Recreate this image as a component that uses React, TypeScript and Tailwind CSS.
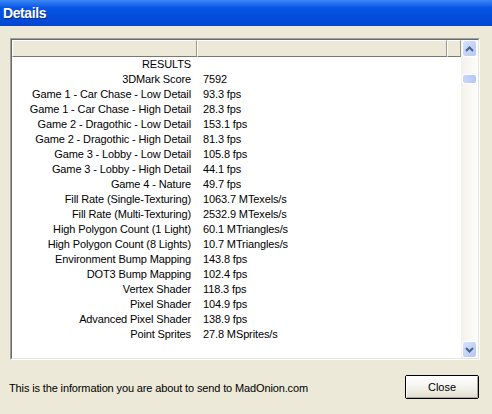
import React from 'react';

// --- Data ---

const results: [string, string][] = [
  ['RESULTS', ''],
  ['3DMark Score', '7592'],
  ['Game 1 - Car Chase - Low Detail', '93.3 fps'],
  ['Game 1 - Car Chase - High Detail', '28.3 fps'],
  ['Game 2 - Dragothic - Low Detail', '153.1 fps'],
  ['Game 2 - Dragothic - High Detail', '81.3 fps'],
  ['Game 3 - Lobby - Low Detail', '105.8 fps'],
  ['Game 3 - Lobby - High Detail', '44.1 fps'],
  ['Game 4 - Nature', '49.7 fps'],
  ['Fill Rate (Single-Texturing)', '1063.7 MTexels/s'],
  ['Fill Rate (Multi-Texturing)', '2532.9 MTexels/s'],
  ['High Polygon Count (1 Light)', '60.1 MTriangles/s'],
  ['High Polygon Count (8 Lights)', '10.7 MTriangles/s'],
  ['Environment Bump Mapping', '143.8 fps'],
  ['DOT3 Bump Mapping', '102.4 fps'],
  ['Vertex Shader', '118.3 fps'],
  ['Pixel Shader', '104.9 fps'],
  ['Advanced Pixel Shader', '138.9 fps'],
  ['Point Sprites', '27.8 MSprites/s'],
];

// --- Components ---

const ScrollButton = ({ dir }: { dir: 'up' | 'down' }) => (
  <div className="mx-[1px] h-[17px] rounded-[3px] border border-white bg-gradient-to-br from-[#D6E2FD] to-[#B4C8F6] flex items-center justify-center">
    <svg width="9" height="6" viewBox="0 0 9 6">
      <path
        d={dir === 'up' ? 'M1 5 L4.5 1.5 L8 5' : 'M1 1 L4.5 4.5 L8 1'}
        fill="none"
        stroke="#4D6185"
        strokeWidth="2"
      />
    </svg>
  </div>
);

const HeaderCell = ({ w }: { w: string }) => (
  <div className={`${w} h-full border-t border-l border-t-white border-l-white border-r border-r-[#9D9B90] border-b border-b-[#7A786E] bg-[#ECE9D8]`} />
);

export default function App() {
  return (
    <div
      className="w-[492px] h-[414px] bg-[#ECE9D8] flex flex-col overflow-hidden text-black"
      style={{ fontFamily: '"Liberation Sans", Arial, sans-serif' }}
    >
      {/* Title bar */}
      <div className="h-[26px] shrink-0 bg-gradient-to-b from-[#3A86F5] via-[#0655E6] via-30% to-[#0345D2] flex items-center px-[3px]">
        <span className="text-white font-bold text-[14px] tracking-[-0.4px] [text-shadow:1px_1px_0_#0A2A8A]">Details</span>
      </div>

      {/* Results list */}
      <div className="mt-[12px] ml-[10px] w-[470px] h-[322px] border border-t-[#A0A0A0] border-l-[#A0A0A0] border-b-white border-r-white">
        <div className="w-full h-full border border-t-[#696969] border-l-[#696969] border-b-[#E3E3E3] border-r-[#E3E3E3] bg-white flex">
          <div className="w-[449px] flex flex-col">
            <div className="h-[17px] flex shrink-0">
              <HeaderCell w="w-[185px]" />
              <HeaderCell w="w-[250px]" />
              <HeaderCell w="w-[14px]" />
            </div>
            <div className="flex flex-col text-[11px] tracking-[-0.12px]">
              {results.map(([label, value]) => (
                <div key={label} className="h-[15px] flex items-center leading-[13px]">
                  <div className="w-[185px] text-right pr-[6px] whitespace-nowrap">{label}</div>
                  <div className="pl-[6px] whitespace-nowrap">{value}</div>
                </div>
              ))}
            </div>
          </div>

          {/* Scrollbar */}
          <div className="w-[17px] h-full bg-gradient-to-r from-[#F3F1EA] to-[#FDFDFB] flex flex-col">
            <ScrollButton dir="up" />
            <div className="mt-[17px] mx-[1px] h-[10px] rounded-[3px] border border-white bg-gradient-to-r from-[#C9D6FC] to-[#B6C7F5]" />
            <div className="flex-1" />
            <ScrollButton dir="down" />
          </div>
        </div>
      </div>

      {/* Footer */}
      <div className="mt-[15px] flex items-start justify-between pl-[9px] pr-[13px]">
        <span className="mt-[7px] text-[11px] leading-[13px] tracking-[-0.13px]">This is the information you are about to send to MadOnion.com</span>
        <button className="w-[74px] h-[24px] border border-black rounded-[2px] bg-[#ECE9D8] p-0">
          <div className="w-full h-full border border-t-white border-l-white border-b-[#ACA899] border-r-[#ACA899] bg-gradient-to-b from-white via-[#F4F3EE] to-[#E3E0D0] flex items-center justify-center text-[11px]">
            Close
          </div>
        </button>
      </div>
    </div>
  );
}
